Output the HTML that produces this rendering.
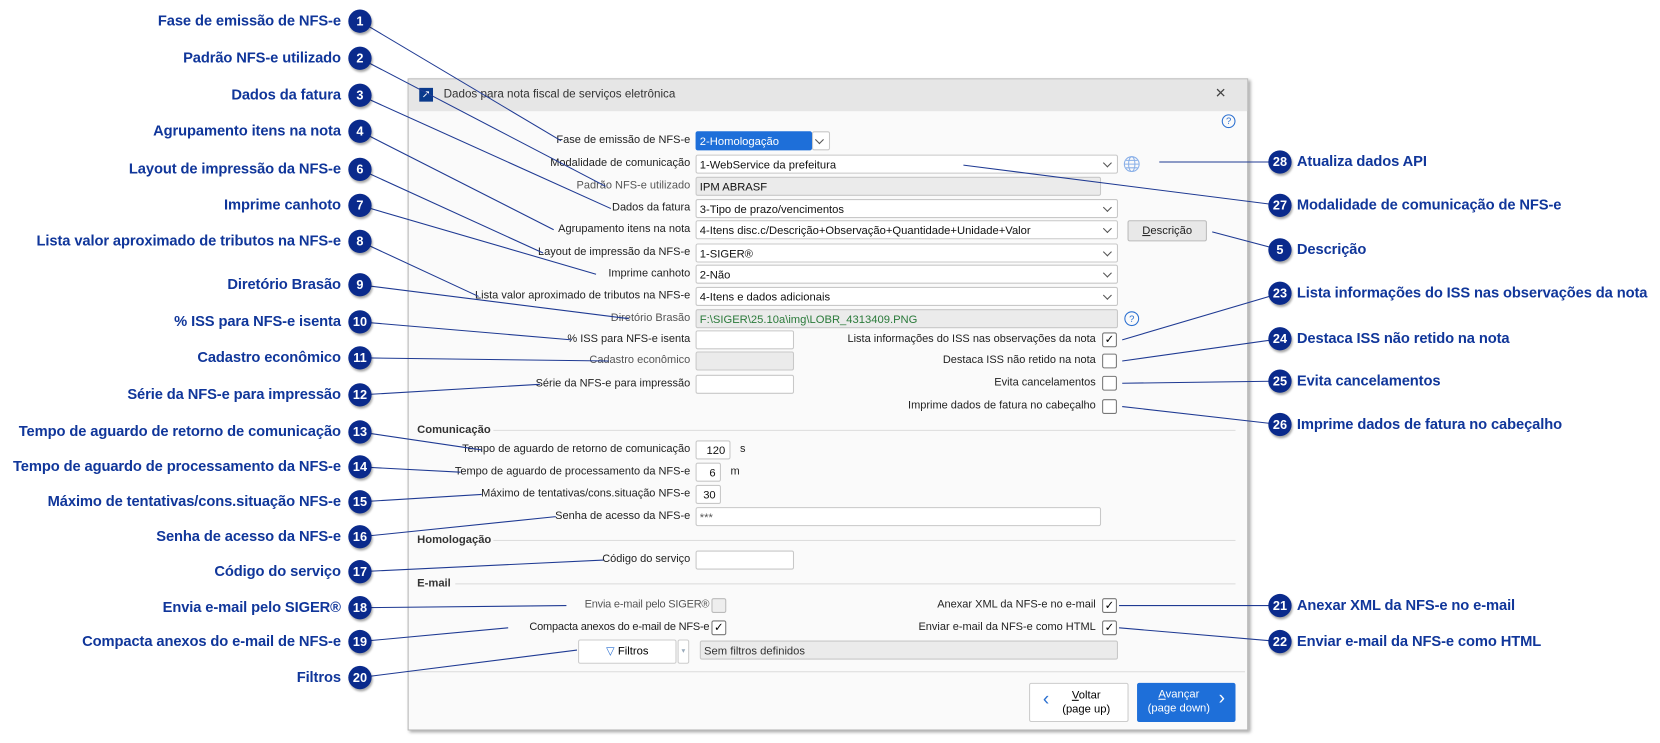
<!DOCTYPE html>
<html><head><meta charset="utf-8"><style>
html,body{margin:0;padding:0;background:#fff;width:1660px;height:743px;overflow:hidden}
#w{position:absolute;left:0;top:0;width:1568px;height:702px;transform:scale(1.0587);transform-origin:0 0;font-family:"Liberation Sans",sans-serif}
.a{position:absolute}
.dlg{left:385px;top:74px;width:792px;height:614px;background:#fafafa;border:1px solid #b8b8b8;box-shadow:2px 2px 3px rgba(0,0,0,.35)}
.tb{left:0;top:0;width:792px;height:30px;background:#e6e6e6}
.l{position:absolute;font-size:10.4px;color:#222;white-space:nowrap;text-align:right}
.f{position:absolute;height:18px;background:#fff;border:1px solid #c8c8c8;border-radius:2px;font-size:10.6px;line-height:18px;padding-left:3px;box-sizing:border-box;color:#111;white-space:nowrap;overflow:hidden}
.g{background:#ebebeb}
.cb:after{content:"";position:absolute;right:6px;top:4px;width:5px;height:5px;border-right:1px solid #555;border-bottom:1px solid #555;transform:rotate(45deg)}
.ck{position:absolute;width:12px;height:12px;border:1px solid #777;border-radius:2px;background:#fff;font-size:11px;line-height:12px;text-align:center;color:#000}
.sec{position:absolute;font-size:10.6px;font-weight:bold;color:#333}
.hr{position:absolute;height:1px;background:#ddd}
.c{position:absolute;width:22px;height:22px;border-radius:50%;background:#0a2a8c;color:#fff;font-weight:bold;font-size:12px;line-height:22px;text-align:center;box-shadow:1px 2px 2px rgba(0,0,0,.35)}
.ct{position:absolute;font-weight:bold;font-size:13.9px;letter-spacing:-0.1px;color:#10369a;white-space:nowrap}
.ctl{text-align:right;right:1246px}
</style></head><body><div id="w">
<div class="a dlg">
<div class="a tb"><div class="a" style="left:10px;top:8px;width:13px;height:13px;background:#0a3a8c;color:#fff;font-size:10px;line-height:13px;text-align:center">↗</div>
<div class="a" style="left:33px;top:8px;font-size:11px;color:#333">Dados para nota fiscal de serviços eletrônica</div>
<div class="a" style="left:762px;top:3px;font-size:17px;color:#444">×</div></div>
<div class="a" style="left:768px;top:33px;width:11px;height:11px;border:1px solid #2a6fd0;border-radius:50%;font-size:9px;line-height:11px;text-align:center;color:#2a6fd0">?</div>
</div>
<!-- labels -->
<div class="l" style="right:916px;top:127px">Fase de emissão de NFS-e</div>
<div class="l" style="right:916px;top:149px">Modalidade de comunicação</div>
<div class="l" style="right:916px;top:170px;color:#555">Padrão NFS-e utilizado</div>
<div class="l" style="right:916px;top:191px">Dados da fatura</div>
<div class="l" style="right:916px;top:211px">Agrupamento itens na nota</div>
<div class="l" style="right:916px;top:233px">Layout de impressão da NFS-e</div>
<div class="l" style="right:916px;top:253px">Imprime canhoto</div>
<div class="l" style="right:916px;top:274px">Lista valor aproximado de tributos na NFS-e</div>
<div class="l" style="right:916px;top:295px;color:#555">Diretório Brasão</div>
<div class="l" style="right:916px;top:315px">% ISS para NFS-e isenta</div>
<div class="l" style="right:916px;top:335px;color:#555">Cadastro econômico</div>
<div class="l" style="right:916px;top:357px">Série da NFS-e para impressão</div>
<div class="l" style="right:916px;top:419px">Tempo de aguardo de retorno de comunicação</div>
<div class="l" style="right:916px;top:440px">Tempo de aguardo de processamento da NFS-e</div>
<div class="l" style="right:916px;top:461px">Máximo de tentativas/cons.situação NFS-e</div>
<div class="l" style="right:916px;top:482px">Senha de acesso da NFS-e</div>
<div class="l" style="right:916px;top:523px">Código do serviço</div>
<div class="l" style="right:898px;top:566px;color:#555;letter-spacing:-0.2px">Envia e-mail pelo SIGER®</div>
<div class="l" style="right:898px;top:587px;letter-spacing:-0.2px">Compacta anexos do e-mail de NFS-e</div>
<!-- fields -->
<div class="f" style="left:657px;top:124px;background:#1e6fd9;color:#fff;border-color:#1e6fd9;width:110px">2-Homologação</div>
<div class="f cb" style="left:767px;top:124px;width:17px"></div>
<div class="f cb" style="left:657px;top:146px;width:399px">1-WebService da prefeitura</div>
<div class="f g" style="left:657px;top:167px;width:383px">IPM ABRASF</div>
<div class="f cb" style="left:657px;top:188px;width:399px">3-Tipo de prazo/vencimentos</div>
<div class="f cb" style="left:657px;top:208px;width:399px">4-Itens disc.c/Descrição+Observação+Quantidade+Unidade+Valor</div>
<div class="f cb" style="left:657px;top:230px;width:399px">1-SIGER®</div>
<div class="f cb" style="left:657px;top:250px;width:399px">2-Não</div>
<div class="f cb" style="left:657px;top:271px;width:399px">4-Itens e dados adicionais</div>
<div class="f g" style="left:657px;top:292px;width:399px;color:#2a7a3a">F:\SIGER\25.10a\img\LOBR_4313409.PNG</div>
<div class="f" style="left:657px;top:312px;width:93px"></div>
<div class="f g" style="left:657px;top:332px;width:93px"></div>
<div class="f" style="left:657px;top:354px;width:93px"></div>
<div class="f" style="left:657px;top:416px;width:33px;text-align:right;padding-right:4px">120</div><div class="l" style="left:699px;top:419px">s</div>
<div class="f" style="left:657px;top:437px;width:24px;text-align:right;padding-right:4px">6</div><div class="l" style="left:690px;top:440px">m</div>
<div class="f" style="left:657px;top:458px;width:24px;text-align:right;padding-right:4px">30</div>
<div class="f" style="left:657px;top:479px;width:383px;color:#555">***</div>
<div class="f" style="left:657px;top:520px;width:93px"></div>
<div class="f g" style="left:661px;top:605px;width:395px;color:#333">Sem filtros definidos</div>
<svg class="a" style="left:1061px;top:147px" width="16" height="16" viewBox="0 0 16 16"><g fill="none" stroke="#8ab0e8" stroke-width="1"><circle cx="8" cy="8" r="7"/><ellipse cx="8" cy="8" rx="3" ry="7"/><line x1="1" y1="8" x2="15" y2="8"/><line x1="2.5" y1="4.5" x2="13.5" y2="4.5"/><line x1="2.5" y1="11.5" x2="13.5" y2="11.5"/></g></svg>
<div class="a" style="left:1062px;top:294px;width:12px;height:12px;border:1px solid #2a6fd0;border-radius:50%;font-size:9px;line-height:12px;text-align:center;color:#2a6fd0">?</div>
<div class="a" style="left:1065px;top:208px;width:75px;height:20px;background:#e8e8e8;border:1px solid #bbb;border-radius:2px;box-sizing:border-box;font-size:10.6px;line-height:18px;text-align:center;color:#222"><u>D</u>escrição</div>
<!-- right checks -->
<div class="l" style="right:533px;top:315px">Lista informações do ISS nas observações da nota</div><div class="ck" style="left:1041px;top:314px">✓</div>
<div class="l" style="right:533px;top:335px">Destaca ISS não retido na nota</div><div class="ck" style="left:1041px;top:334px"></div>
<div class="l" style="right:533px;top:356px">Evita cancelamentos</div><div class="ck" style="left:1041px;top:355px"></div>
<div class="l" style="right:533px;top:378px">Imprime dados de fatura no cabeçalho</div><div class="ck" style="left:1041px;top:377px"></div>
<div class="l" style="right:533px;top:566px">Anexar XML da NFS-e no e-mail</div><div class="ck" style="left:1041px;top:565px">✓</div>
<div class="l" style="right:533px;top:587px">Enviar e-mail da NFS-e como HTML</div><div class="ck" style="left:1041px;top:586px">✓</div>
<div class="ck" style="left:672px;top:565px;background:#eee;border-color:#bbb"></div>
<div class="ck" style="left:672px;top:586px">✓</div>
<!-- sections -->
<div class="sec" style="left:394px;top:400px">Comunicação</div><div class="hr" style="left:466px;top:406px;width:701px"></div>
<div class="sec" style="left:394px;top:504px">Homologação</div><div class="hr" style="left:466px;top:510px;width:701px"></div>
<div class="sec" style="left:394px;top:545px">E-mail</div><div class="hr" style="left:430px;top:551px;width:737px"></div>
<div class="hr" style="left:386px;top:634px;width:790px"></div>
<div class="a" style="left:546px;top:604px;width:93px;height:23px;background:#fff;border:1px solid #ccc;border-radius:2px;box-sizing:border-box;font-size:10.6px;line-height:21px;text-align:center"><span style="color:#2a6fd0">▽</span> Filtros</div>
<div class="a" style="left:640px;top:604px;width:11px;height:23px;background:#fff;border:1px solid #ccc;border-radius:2px;box-sizing:border-box;font-size:7px;color:#9ab;text-align:center;line-height:21px">▾</div>
<div class="a" style="left:972px;top:645px;width:94px;height:37px;background:#fff;border:1px solid #ccc;border-radius:2px;box-sizing:border-box;font-size:10.6px;text-align:center;padding-top:5px;padding-left:14px;line-height:13px"><span class="a" style="left:12px;top:8px;font-size:18px;color:#2a6fd0">‹</span><u>V</u>oltar<br>(page up)</div>
<div class="a" style="left:1074px;top:645px;width:93px;height:37px;background:#1e6fd9;border-radius:2px;color:#fff;font-size:10.6px;text-align:center;padding-top:5px;padding-right:14px;box-sizing:border-box;line-height:13px"><u>A</u>vançar<br>(page down)<span class="a" style="right:10px;top:8px;font-size:18px">›</span></div>
<svg class="a" style="left:0;top:0" width="1568" height="702"><g stroke="#1f3a93" stroke-width="1" fill="none">
<line x1="340" y1="20" x2="530" y2="133"/><line x1="340" y1="55" x2="572" y2="176"/><line x1="340" y1="90" x2="577" y2="197"/>
<line x1="340" y1="124" x2="523" y2="217"/><line x1="340" y1="160" x2="513" y2="239"/><line x1="340" y1="194" x2="563" y2="259"/>
<line x1="340" y1="228" x2="452" y2="280"/><line x1="340" y1="269" x2="594" y2="301"/><line x1="340" y1="304" x2="540" y2="321"/>
<line x1="340" y1="338" x2="575" y2="341"/><line x1="340" y1="373" x2="510" y2="363"/><line x1="340" y1="408" x2="455" y2="425"/>
<line x1="340" y1="441" x2="435" y2="446"/><line x1="340" y1="474" x2="455" y2="467"/><line x1="340" y1="507" x2="525" y2="488"/>
<line x1="340" y1="540" x2="570" y2="529"/><line x1="340" y1="574" x2="535" y2="572"/><line x1="340" y1="606" x2="480" y2="593"/>
<line x1="340" y1="640" x2="545" y2="614"/>
<line x1="1209" y1="153" x2="1095" y2="153"/><line x1="1209" y1="194" x2="910" y2="156"/><line x1="1209" y1="236" x2="1145" y2="219"/>
<line x1="1209" y1="277" x2="1060" y2="321"/><line x1="1209" y1="320" x2="1060" y2="341"/><line x1="1209" y1="360" x2="1060" y2="362"/>
<line x1="1209" y1="401" x2="1060" y2="384"/><line x1="1209" y1="572" x2="1057" y2="572"/><line x1="1209" y1="606" x2="1057" y2="593"/>
</g></svg>
<!-- callouts left -->
<div class="ct ctl" style="top:11px">Fase de emissão de NFS-e</div><div class="c" style="left:329px;top:9px">1</div>
<div class="ct ctl" style="top:46px">Padrão NFS-e utilizado</div><div class="c" style="left:329px;top:44px">2</div>
<div class="ct ctl" style="top:81px">Dados da fatura</div><div class="c" style="left:329px;top:79px">3</div>
<div class="ct ctl" style="top:115px">Agrupamento itens na nota</div><div class="c" style="left:329px;top:113px">4</div>
<div class="ct ctl" style="top:151px">Layout de impressão da NFS-e</div><div class="c" style="left:329px;top:149px">6</div>
<div class="ct ctl" style="top:185px">Imprime canhoto</div><div class="c" style="left:329px;top:183px">7</div>
<div class="ct ctl" style="top:219px">Lista valor aproximado de tributos na NFS-e</div><div class="c" style="left:329px;top:217px">8</div>
<div class="ct ctl" style="top:260px">Diretório Brasão</div><div class="c" style="left:329px;top:258px">9</div>
<div class="ct ctl" style="top:295px">% ISS para NFS-e isenta</div><div class="c" style="left:329px;top:293px">10</div>
<div class="ct ctl" style="top:329px">Cadastro econômico</div><div class="c" style="left:329px;top:327px">11</div>
<div class="ct ctl" style="top:364px">Série da NFS-e para impressão</div><div class="c" style="left:329px;top:362px">12</div>
<div class="ct ctl" style="top:399px">Tempo de aguardo de retorno de comunicação</div><div class="c" style="left:329px;top:397px">13</div>
<div class="ct ctl" style="top:432px">Tempo de aguardo de processamento da NFS-e</div><div class="c" style="left:329px;top:430px">14</div>
<div class="ct ctl" style="top:465px">Máximo de tentativas/cons.situação NFS-e</div><div class="c" style="left:329px;top:463px">15</div>
<div class="ct ctl" style="top:498px">Senha de acesso da NFS-e</div><div class="c" style="left:329px;top:496px">16</div>
<div class="ct ctl" style="top:531px">Código do serviço</div><div class="c" style="left:329px;top:529px">17</div>
<div class="ct ctl" style="top:565px">Envia e-mail pelo SIGER®</div><div class="c" style="left:329px;top:563px">18</div>
<div class="ct ctl" style="top:597px">Compacta anexos do e-mail de NFS-e</div><div class="c" style="left:329px;top:595px">19</div>
<div class="ct ctl" style="top:631px">Filtros</div><div class="c" style="left:329px;top:629px">20</div>
<!-- callouts right -->
<div class="c" style="left:1198px;top:142px">28</div><div class="ct" style="left:1225px;top:144px">Atualiza dados API</div>
<div class="c" style="left:1198px;top:183px">27</div><div class="ct" style="left:1225px;top:185px">Modalidade de comunicação de NFS-e</div>
<div class="c" style="left:1198px;top:225px">5</div><div class="ct" style="left:1225px;top:227px">Descrição</div>
<div class="c" style="left:1198px;top:266px">23</div><div class="ct" style="left:1225px;top:268px">Lista informações do ISS nas observações da nota</div>
<div class="c" style="left:1198px;top:309px">24</div><div class="ct" style="left:1225px;top:311px">Destaca ISS não retido na nota</div>
<div class="c" style="left:1198px;top:349px">25</div><div class="ct" style="left:1225px;top:351px">Evita cancelamentos</div>
<div class="c" style="left:1198px;top:390px">26</div><div class="ct" style="left:1225px;top:392px">Imprime dados de fatura no cabeçalho</div>
<div class="c" style="left:1198px;top:561px">21</div><div class="ct" style="left:1225px;top:563px">Anexar XML da NFS-e no e-mail</div>
<div class="c" style="left:1198px;top:595px">22</div><div class="ct" style="left:1225px;top:597px">Enviar e-mail da NFS-e como HTML</div>
</div></body></html>
